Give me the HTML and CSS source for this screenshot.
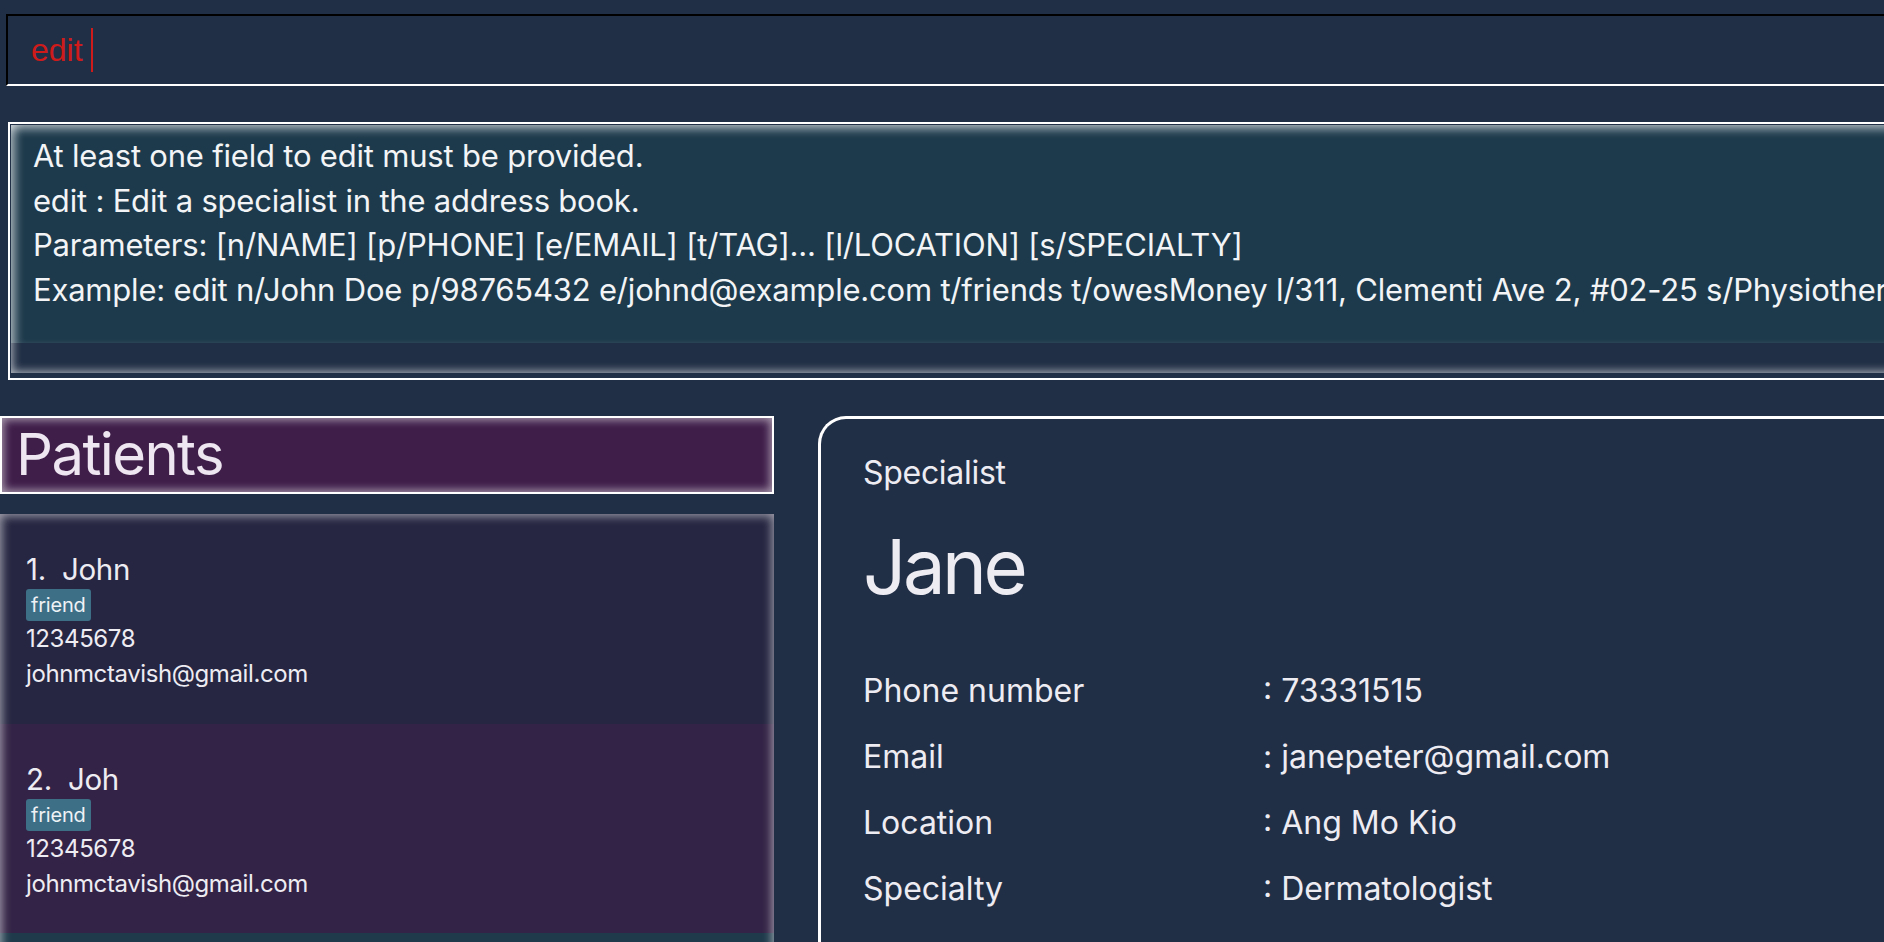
FILE: index.html
```html
<!DOCTYPE html>
<html lang="en">
<head>
<meta charset="utf-8">
<title>Specialist book</title>
<link rel="stylesheet" href="styles.css">
</head>
<body>
<div class="app">
  <div class="command">
    <span class="cmd-text">edit</span><span class="caret"></span>
  </div>

  <div class="result-frame">
    <div class="result">
      <div class="result-text">
        <div class="result-line">At least one field to edit must be provided.</div>
        <div class="result-line">edit : Edit a specialist in the address book.</div>
        <div class="result-line">Parameters: [n/NAME] [p/PHONE] [e/EMAIL] [t/TAG]... [l/LOCATION] [s/SPECIALTY]</div>
        <div class="result-line">Example: edit n/John Doe p/98765432 e/johnd@example.com t/friends t/owesMoney l/311, Clementi Ave 2, #02-25 s/Physiotherapist</div>
      </div>
      <div class="result-scroll"></div>
    </div>
  </div>

  <div class="main">
    <div class="left">
      <div class="list-header">Patients</div>
      <div class="list">
        <div class="cell cell-odd">
          <div class="cell-name">1.&nbsp; John</div>
          <div class="tags"><span class="tag">friend</span></div>
          <div class="cell-line">12345678</div>
          <div class="cell-line">johnmctavish@gmail.com</div>
        </div>
        <div class="cell cell-even">
          <div class="cell-name">2.&nbsp; Joh</div>
          <div class="tags"><span class="tag">friend</span></div>
          <div class="cell-line">12345678</div>
          <div class="cell-line">johnmctavish@gmail.com</div>
        </div>
        <div class="cell cell-third"></div>
      </div>
    </div>

    <div class="card">
      <div class="card-kind">Specialist</div>
      <div class="card-name">Jane</div>
      <div class="card-rows">
        <div class="row"><span class="row-label">Phone number</span><span class="row-value">: 73331515</span></div>
        <div class="row"><span class="row-label">Email</span><span class="row-value">: janepeter@gmail.com</span></div>
        <div class="row"><span class="row-label">Location</span><span class="row-value">: Ang Mo Kio</span></div>
        <div class="row"><span class="row-label">Specialty</span><span class="row-value">: Dermatologist</span></div>
      </div>
    </div>
  </div>
</div>
</body>
</html>
```

FILE: styles.css
```css
html, body {
  margin: 0;
  padding: 0;
  height: 942px;
  overflow: hidden;
  background: #212f46;
}

.app {
  width: 2000px;
  font-family: Inter, "Noto Sans", sans-serif;
  color: #eeecf3;
  display: flex;
  flex-direction: column;
}

/* command box */
.command {
  margin: 14px 0 0 6px;
  height: 72px;
  box-sizing: border-box;
  border-top: 2px solid #000;
  border-left: 2px solid #000;
  border-bottom: 2px solid #fff;
  display: flex;
  align-items: center;
  padding-left: 23px;
}

.cmd-text {
  font-family: "Liberation Sans", Arial, sans-serif;
  font-size: 32px;
  line-height: 1;
  color: #d01b1b;
}

.caret {
  width: 2px;
  height: 44px;
  background: #d01b1b;
  margin-left: 8px;
}

/* result box */
.result-frame {
  margin: 36px 0 0 8px;
  border: 2px solid #fff;
  padding: 1px 0 5px 1px;
}

.result {
  height: 248px;
  display: flex;
  flex-direction: column;
  box-shadow: inset 0 0 10px 1px rgba(255, 255, 255, 0.7);
  background: #212f46;
}

.result-text {
  height: 218px;
  box-sizing: border-box;
  background: #1d3a4c;
  padding: 9px 0 0 22px;
  font-size: 31px;
  line-height: 44.5px;
  letter-spacing: -0.2px;
  color: #f2f4f6;
  white-space: nowrap;
  box-shadow: inset 0 10px 10px -6px rgba(255, 255, 255, 0.6), inset 10px 0 10px -6px rgba(255, 255, 255, 0.6);
}

.result-scroll {
  flex: 1;
}

/* main area */
.main {
  margin-top: 36px;
  display: flex;
  gap: 44px;
  height: 620px;
}

.left {
  width: 774px;
  display: flex;
  flex-direction: column;
  gap: 20px;
}

.list-header {
  flex-shrink: 0;
  height: 78px;
  box-sizing: border-box;
  border: 2px solid #fff;
  background: #3f1e4a;
  box-shadow: inset 0 0 9px 2px rgba(255, 255, 255, 0.55);
  font-size: 58px;
  line-height: 1;
  letter-spacing: -1.6px;
  padding: 7px 0 0 14px;
  color: #eee6f0;
}

.list {
  flex: 1;
  display: flex;
  flex-direction: column;
  position: relative;
  overflow: hidden;
}

.list::after {
  content: "";
  position: absolute;
  inset: 0;
  box-shadow: inset 0 0 10px 2px rgba(255, 255, 255, 0.55);
  pointer-events: none;
}

.cell {
  height: 209.5px;
  box-sizing: border-box;
  padding: 41px 0 0 26px;
  flex-shrink: 0;
}

.cell-odd { background: #262642; }
.cell-even { background: #332346; }
.cell-third { background: #1e3a4b; }

.cell-name {
  font-size: 29.5px;
  line-height: 29px;
  letter-spacing: -0.3px;
}

.tags {
  margin-top: 5px;
  height: 32px;
  display: flex;
}

.tag {
  background: #3d6f87;
  border-radius: 3px;
  font-size: 20px;
  line-height: 32px;
  padding: 0 5px;
  letter-spacing: -0.2px;
  color: #eef2f5;
}

.cell-line {
  font-size: 24px;
  line-height: 35px;
  letter-spacing: -0.4px;
}

/* specialist card */
.card {
  flex: 1;
  border: 3px solid #fff;
  border-right: none;
  border-bottom: none;
  border-top-left-radius: 28px;
  padding: 38px 0 0 42px;
}

.card-kind {
  font-size: 32px;
  line-height: 1;
  letter-spacing: -0.3px;
}

.card-name {
  font-size: 76px;
  line-height: 1;
  letter-spacing: -3.5px;
  margin-top: 39px;
}

.card-rows {
  margin-top: 54px;
}

.row {
  display: flex;
  font-size: 32px;
  line-height: 66px;
}

.row-label {
  width: 400px;
}
```
